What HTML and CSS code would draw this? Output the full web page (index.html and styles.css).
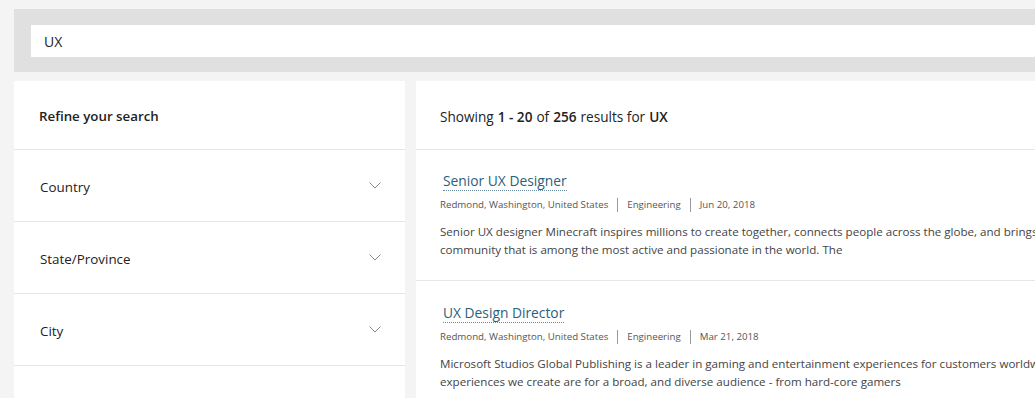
FILE: index.html
```html
<!DOCTYPE html>
<html lang="en">
<head>
    <meta charset="UTF-8">
    <title>Search results</title>
    <link rel="stylesheet" href="styles.css">
</head>
<body>
    <div class="search-bar">
        <input type="text" class="search-input" value="UX">
    </div>
    <div class="content">
        <aside class="filters">
            <h2 class="filters-title">Refine your search</h2>
            <div class="filter-row">
                <span>Country</span>
                <svg class="chevron" width="12" height="7" viewBox="0 0 12 7"><path d="M0.5 0.5 L6 6 L11.5 0.5" fill="none" stroke="#8a8a8a" stroke-width="1"/></svg>
            </div>
            <div class="filter-row">
                <span>State/Province</span>
                <svg class="chevron" width="12" height="7" viewBox="0 0 12 7"><path d="M0.5 0.5 L6 6 L11.5 0.5" fill="none" stroke="#8a8a8a" stroke-width="1"/></svg>
            </div>
            <div class="filter-row">
                <span>City</span>
                <svg class="chevron" width="12" height="7" viewBox="0 0 12 7"><path d="M0.5 0.5 L6 6 L11.5 0.5" fill="none" stroke="#8a8a8a" stroke-width="1"/></svg>
            </div>
            <div class="filter-row"></div>
        </aside>
        <main class="results">
            <div class="results-summary">
                Showing <b>1 - 20</b> of <b>256</b> results for <b>UX</b>
            </div>
            <div class="job">
                <a class="job-title" href="#">Senior UX Designer</a>
                <div class="job-meta">
                    <span>Redmond, Washington, United States</span>
                    <span>Engineering</span>
                    <span>Jun 20, 2018</span>
                </div>
                <p class="job-desc">Senior UX designer Minecraft inspires millions to create together, connects people across the globe, and brings together a community that is among the most active and passionate in the world. The</p>
            </div>
            <div class="job">
                <a class="job-title" href="#">UX Design Director</a>
                <div class="job-meta">
                    <span>Redmond, Washington, United States</span>
                    <span>Engineering</span>
                    <span>Mar 21, 2018</span>
                </div>
                <p class="job-desc">Microsoft Studios Global Publishing is a leader in gaming and entertainment experiences for customers worldwide. The experiences we create are for a broad, and diverse audience - from hard-core gamers</p>
            </div>
        </main>
    </div>
</body>
</html>
```

FILE: styles.css
```css
body {
    margin: 0;
    padding: 9px 0 0 14px;
    background-color: #f4f4f4;
    font-family: "Open Sans", sans-serif;
    color: #222222;
    overflow: hidden;
}

.search-bar {
    background-color: #e0e0e0;
    padding: 16px 0 15px 17px;
}

.search-input {
    display: block;
    box-sizing: border-box;
    width: 100%;
    height: 32px;
    border: none;
    outline: none;
    padding: 0 13px;
    background-color: #ffffff;
    font-family: inherit;
    font-size: 14px;
    color: #222222;
}

.content {
    display: flex;
    gap: 11px;
    margin-top: 9px;
}

.filters {
    width: 391px;
    flex-shrink: 0;
    background-color: #ffffff;
}

.filters-title {
    margin: 0;
    height: 69px;
    box-sizing: border-box;
    display: flex;
    align-items: center;
    padding: 2px 0 0 25px;
    font-size: 13.3px;
    font-weight: 600;
    border-bottom: 1px solid #e6e6e6;
}

.filter-row {
    height: 72px;
    box-sizing: border-box;
    display: flex;
    align-items: center;
    justify-content: space-between;
    padding: 2px 24px 0 26px;
    font-size: 13.4px;
    border-bottom: 1px solid #e6e6e6;
}

.chevron {
    margin-top: -3px;
}

.results {
    flex: 1;
    background-color: #ffffff;
    white-space: nowrap;
    overflow: hidden;
}

.results-summary {
    height: 69px;
    box-sizing: border-box;
    display: flex;
    align-items: center;
    padding: 2px 0 0 24px;
    font-size: 13.6px;
    border-bottom: 1px solid #e6e6e6;
}

.results-summary b {
    font-weight: 600;
    margin: 0 4px;
}

.job {
    height: 131px;
    box-sizing: border-box;
    padding: 19px 0 0 24px;
    border-bottom: 1px solid #e6e6e6;
}

.job:last-child {
    padding-top: 20px;
}

.job-title {
    display: inline-block;
    margin-left: 3px;
    font-size: 13.8px;
    color: #2b5f7e;
    text-decoration: none;
    border-bottom: 1px dotted #6a8aa0;
    line-height: 18px;
}

.job-meta {
    display: flex;
    margin-top: 7px;
    font-size: 9.7px;
    color: #555555;
    line-height: 14px;
}

.job-meta span {
    padding: 0 9px;
    border-left: 1px solid #999999;
}

.job-meta span:first-child {
    padding-left: 0;
    border-left: none;
}

.job-desc {
    margin: 11px 0 0;
    font-size: 11.6px;
    line-height: 18px;
    color: #444444;
    white-space: normal;
    width: 690px;
}
```
